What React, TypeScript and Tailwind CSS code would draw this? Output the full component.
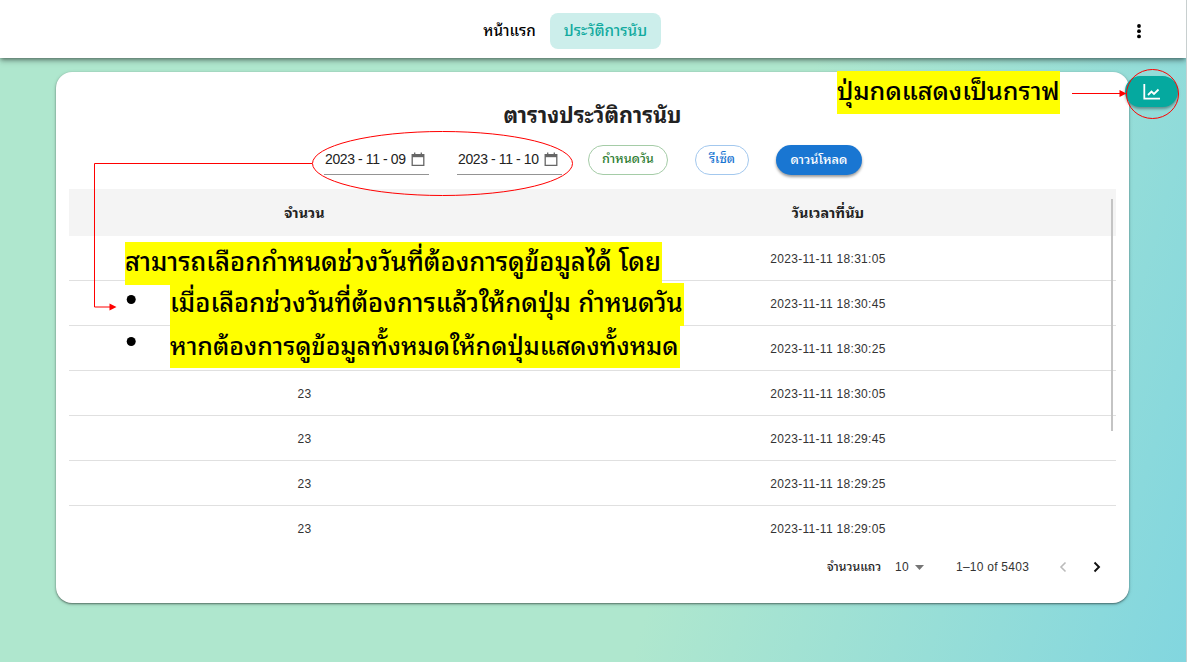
import type { ReactNode } from "react";

const rows = [
  { count: "", time: "18:31:05" },
  { count: "", time: "18:30:45" },
  { count: "", time: "18:30:25" },
  { count: "23", time: "18:30:05" },
  { count: "23", time: "18:29:45" },
  { count: "23", time: "18:29:25" },
  { count: "23", time: "18:29:05" },
];

function DateField({ value, className }: { value: string; className: string }) {
  return (
    <div className={`flex h-[31px] w-[105px] items-center border-b border-[#949494] pl-[1px] text-[14px] leading-none tracking-[-0.4px] text-[#222] ${className}`}>
      <span className="w-[86px] whitespace-nowrap">{value}</span>
      <svg className="h-[15px] w-[14px]" viewBox="0 0 14 15" fill="none" stroke="#666" strokeWidth="1.3">
        <path d="M1.200 2.700h11.600v10.600H1.200zM3.700 0.500v2M10.300 0.500v2" />
        <path d="M1 4h12" strokeWidth="2.400" />
      </svg>
    </div>
  );
}

function Mark({ children, className }: { children: ReactNode; className: string }) {
  return (
    <div className={`absolute flex h-[43px] items-center whitespace-nowrap bg-[#ff0] pb-px font-medium leading-none text-black ${className}`}>
      {children}
    </div>
  );
}

export default function App() {
  return (
    <div className="relative flex h-[662px] w-[1187px] flex-col overflow-hidden border-r border-[#c8cfcf] bg-[linear-gradient(107deg,#afe7ce_60%,#82d6df_100%)] font-['Liberation_Sans','Noto_Sans_Thai_Looped',sans-serif] text-[#222]">
      <header className="flex h-[58px] shrink-0 items-start bg-white pt-[13px] shadow-[0_2px_4px_-1px_rgba(0,0,0,.4),0_3px_6px_rgba(0,0,0,.25)]">
        <div className="ml-[469px] flex h-9 w-[81px] items-center justify-center whitespace-nowrap text-[15.2px] font-medium text-black">หน้าแรก</div>
        <div className="flex h-9 w-[111px] items-center justify-center whitespace-nowrap rounded-lg bg-[#cceeeb] text-[15.2px] font-medium text-[#12aa9f]">ประวัติการนับ</div>
        <svg className="ml-[474px] mt-[10px] h-4 w-2" viewBox="0 0 8 16" fill="#000">
          <circle cx="4" cy="3" r="1.9" />
          <circle cx="4" cy="8.2" r="1.9" />
          <circle cx="4" cy="13.4" r="1.9" />
        </svg>
      </header>

      <main className="ml-[56px] mt-[14px] flex h-[531px] w-[1073px] shrink-0 flex-col rounded-2xl bg-white px-[13px] shadow-[0_1px_2px_rgba(0,0,0,.45),0_1px_4px_rgba(0,0,0,.15)]">
        <h1 className="mt-[28px] flex h-8 items-center justify-center whitespace-nowrap text-[21.6px] font-bold">ตารางประวัติการนับ</h1>
        <div className="ml-[255px] mt-[12px] flex h-[32px] items-start">
          <DateField value="2023 - 11 - 09" className="" />
          <DateField value="2023 - 11 - 10" className="ml-[28px]" />
          <button className="ml-[26px] mt-px h-[30px] w-[80px] whitespace-nowrap rounded-full border border-[#a5cca7] text-[12.7px] font-medium text-[#2e7d32]">กำหนดวัน</button>
          <button className="ml-[27px] mt-px h-[30px] w-[54px] whitespace-nowrap rounded-full border border-[#a3c8ee] text-[12.7px] font-medium text-[#1976d2]">รีเซ็ต</button>
          <button className="ml-[27px] mt-px h-[30px] w-[86px] whitespace-nowrap rounded-full bg-[#1976d2] text-[12.9px] font-medium text-white shadow-[0_2px_3px_rgba(0,0,0,.4)]">ดาวน์โหลด</button>
        </div>

        <div className="mt-[13px] h-[356px] shrink-0 overflow-hidden text-[12px]">
          <div className="grid h-[47px] grid-cols-[471px_576px] items-center bg-[#f4f4f4] pt-[3px] text-center text-[14.4px] font-bold">
            <div>จำนวน</div>
            <div>วันเวลาที่นับ</div>
          </div>
          {rows.map(({ count, time }) => (
            <div key={time} className="grid h-[45px] grid-cols-[471px_576px] items-center border-b border-[#e0e0e0] pt-[2px] text-center tracking-[0.3px] text-[#333]">
              <div>{count}</div>
              <div>2023-11-11 {time}</div>
            </div>
          ))}
        </div>

        <div className="flex h-[44px] items-center whitespace-nowrap text-[12px] tracking-[0.25px] text-[#333]">
          <span className="ml-[758px] w-[68px] text-[12.2px] font-medium tracking-normal text-[#222]">จำนวนแถว</span>
          <span className="w-[20px]">10</span>
          <svg className="h-[5px] w-[9px]" viewBox="0 0 9 5" fill="#757575"><path d="M0 0h9L4.5 5z" /></svg>
          <span className="ml-[32px] w-[103px]">1–10 of 5403</span>
          <svg className="h-3 w-2" viewBox="0 0 8 12" fill="none" stroke="#bbb" strokeWidth="1.600"><path d="M6.5 1.5L2 6l4.500 4.500" /></svg>
          <svg className="ml-[26px] h-3 w-2" viewBox="0 0 8 12" fill="none" stroke="#111" strokeWidth="1.900"><path d="M1.500 1.500L6 6l-4.500 4.500" /></svg>
        </div>
      </main>

      <div className="absolute left-[1111px] top-[199px] h-[232px] w-[2px] bg-[#c4c4c4]" />
      <button className="absolute left-[1125px] top-[76px] flex h-[31px] w-[53px] items-center justify-center rounded-full bg-[#05a99f] shadow-[0_2px_3px_rgba(0,0,0,.35)]">
        <svg className="h-[16px] w-[17px]" viewBox="0 0 17 16" fill="none" stroke="#fff" strokeWidth="1.800">
          <path d="M1.300 0v14.700H17M5 11l3.500-3.500 2.500 2.500L15.500 5.500" />
        </svg>
      </button>

      <Mark className="left-[837px] top-[71px] w-[223px] text-[25.2px]">ปุ่มกดแสดงเป็นกราฟ</Mark>
      <Mark className="left-[125px] top-[242px] w-[537px] text-[25.6px]">สามารถเลือกกำหนดช่วงวันที่ต้องการดูข้อมูลได้ โดย</Mark>
      <Mark className="left-[170px] top-[283px] w-[514px] text-[25.6px]">เมื่อเลือกช่วงวันที่ต้องการแล้วให้กดปุ่ม กำหนดวัน</Mark>
      <Mark className="left-[170px] top-[325px] w-[510px] text-[25px]">หากต้องการดูข้อมูลทั้งหมดให้กดปุ่มแสดงทั้งหมด</Mark>
      <svg className="pointer-events-none absolute left-0 top-0 h-[662px] w-[1187px]" viewBox="0 0 1187 662" fill="none" stroke="#f00">
        <ellipse cx="442.500" cy="163.500" rx="130" ry="32" />
        <path d="M312 163.500H94.500v143.500H110M1072 93.500h49" />
        <ellipse cx="1152.500" cy="94" rx="26" ry="24.500" />
        <path d="M109.500 303.500l7 3.500-7 3.500zM1119.500 90l7 3.500-7 3.500z" fill="#f00" stroke="none" />
        <g fill="#000" stroke="none">
          <circle cx="131.200" cy="299.500" r="4.500" />
          <circle cx="131.200" cy="341.500" r="4.500" />
        </g>
      </svg>
    </div>
  );
}
